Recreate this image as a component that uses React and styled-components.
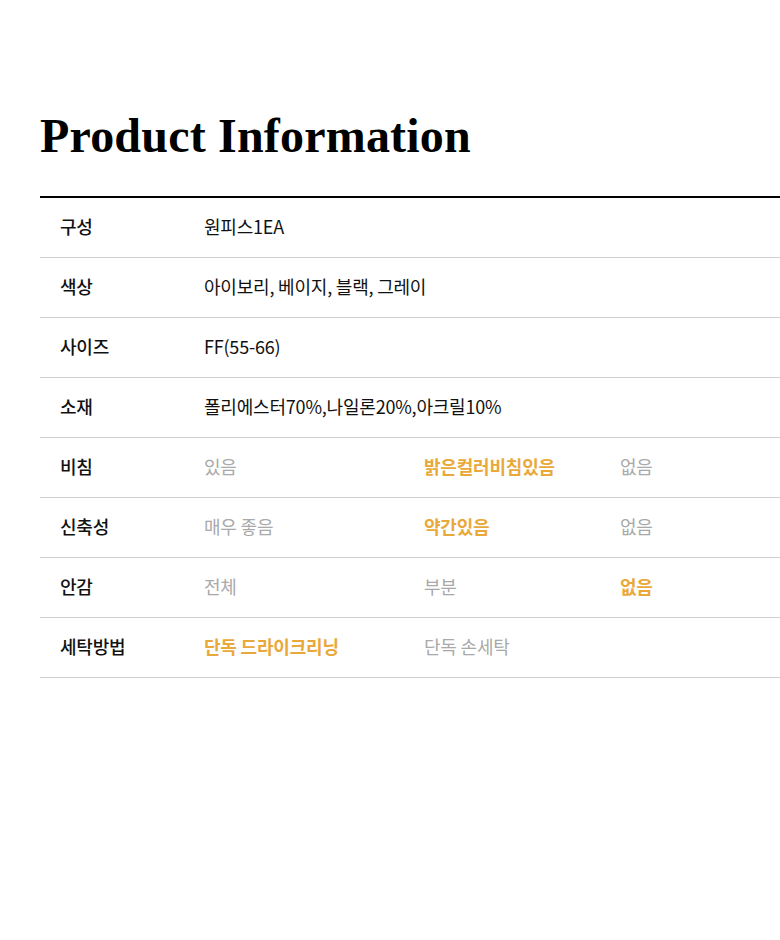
import React from 'react';
import styled, {createGlobalStyle} from 'styled-components';

const orange = '#e9a93a';
const gray = '#a9a9a9';

const GlobalStyle = createGlobalStyle`
  body {
    margin: 0;
    background: #fff;
    font-family: "Noto Sans CJK KR", "Noto Sans", sans-serif;
  }
`;

const Page = styled.div`
  width: 780px;
  height: 940px;
  padding: 106px 0 0 40px;
  box-sizing: border-box;
`;

const Title = styled.h1`
  margin: 0 0 30px;
  font-family: "Liberation Serif", "DejaVu Serif", serif;
  font-weight: 700;
  font-size: 48px;
  line-height: 60px;
  letter-spacing: 0.2px;
  color: #000;
`;

const Table = styled.div`
  border-top: 2px solid #000;
`;

const Row = styled.div`
  display: grid;
  grid-template-columns: 164px 220px 196px 1fr;
  align-items: center;
  height: 60px;
  padding-bottom: 3px;
  border-bottom: 1px solid #cfcfcf;
  box-sizing: border-box;
  font-size: 18px;
  letter-spacing: -0.2px;
`;

const Label = styled.div`
  padding-left: 20px;
  font-weight: 500;
  color: #111;
`;

const Value = styled.div`
  grid-column: ${({span}) => (span ? '2 / 5' : 'auto')};
  color: ${({active, muted}) => (active ? orange : muted ? gray : '#111')};
  font-weight: ${({active}) => (active ? 700 : 400)};
`;

const plain = [
  ['구성', '원피스1EA'],
  ['색상', '아이보리, 베이지, 블랙, 그레이'],
  ['사이즈', 'FF(55-66)'],
  ['소재', '폴리에스터70%,나일론20%,아크릴10%'],
];

const options = [
  ['비침', ['있음', '밝은컬러비침있음', '없음'], 1],
  ['신축성', ['매우 좋음', '약간있음', '없음'], 1],
  ['안감', ['전체', '부분', '없음'], 2],
  ['세탁방법', ['단독 드라이크리닝', '단독 손세탁'], 0],
];

export default function App() {
  return (
    <Page>
      <GlobalStyle />
      <Title>Product Information</Title>
      <Table>
        {plain.map(([label, value]) => (
          <Row key={label}>
            <Label>{label}</Label>
            <Value span>{value}</Value>
          </Row>
        ))}
        {options.map(([label, values, selected]) => (
          <Row key={label}>
            <Label>{label}</Label>
            {values.map((v, i) => (
              <Value key={v} muted active={i === selected}>
                {v}
              </Value>
            ))}
          </Row>
        ))}
      </Table>
    </Page>
  );
}
